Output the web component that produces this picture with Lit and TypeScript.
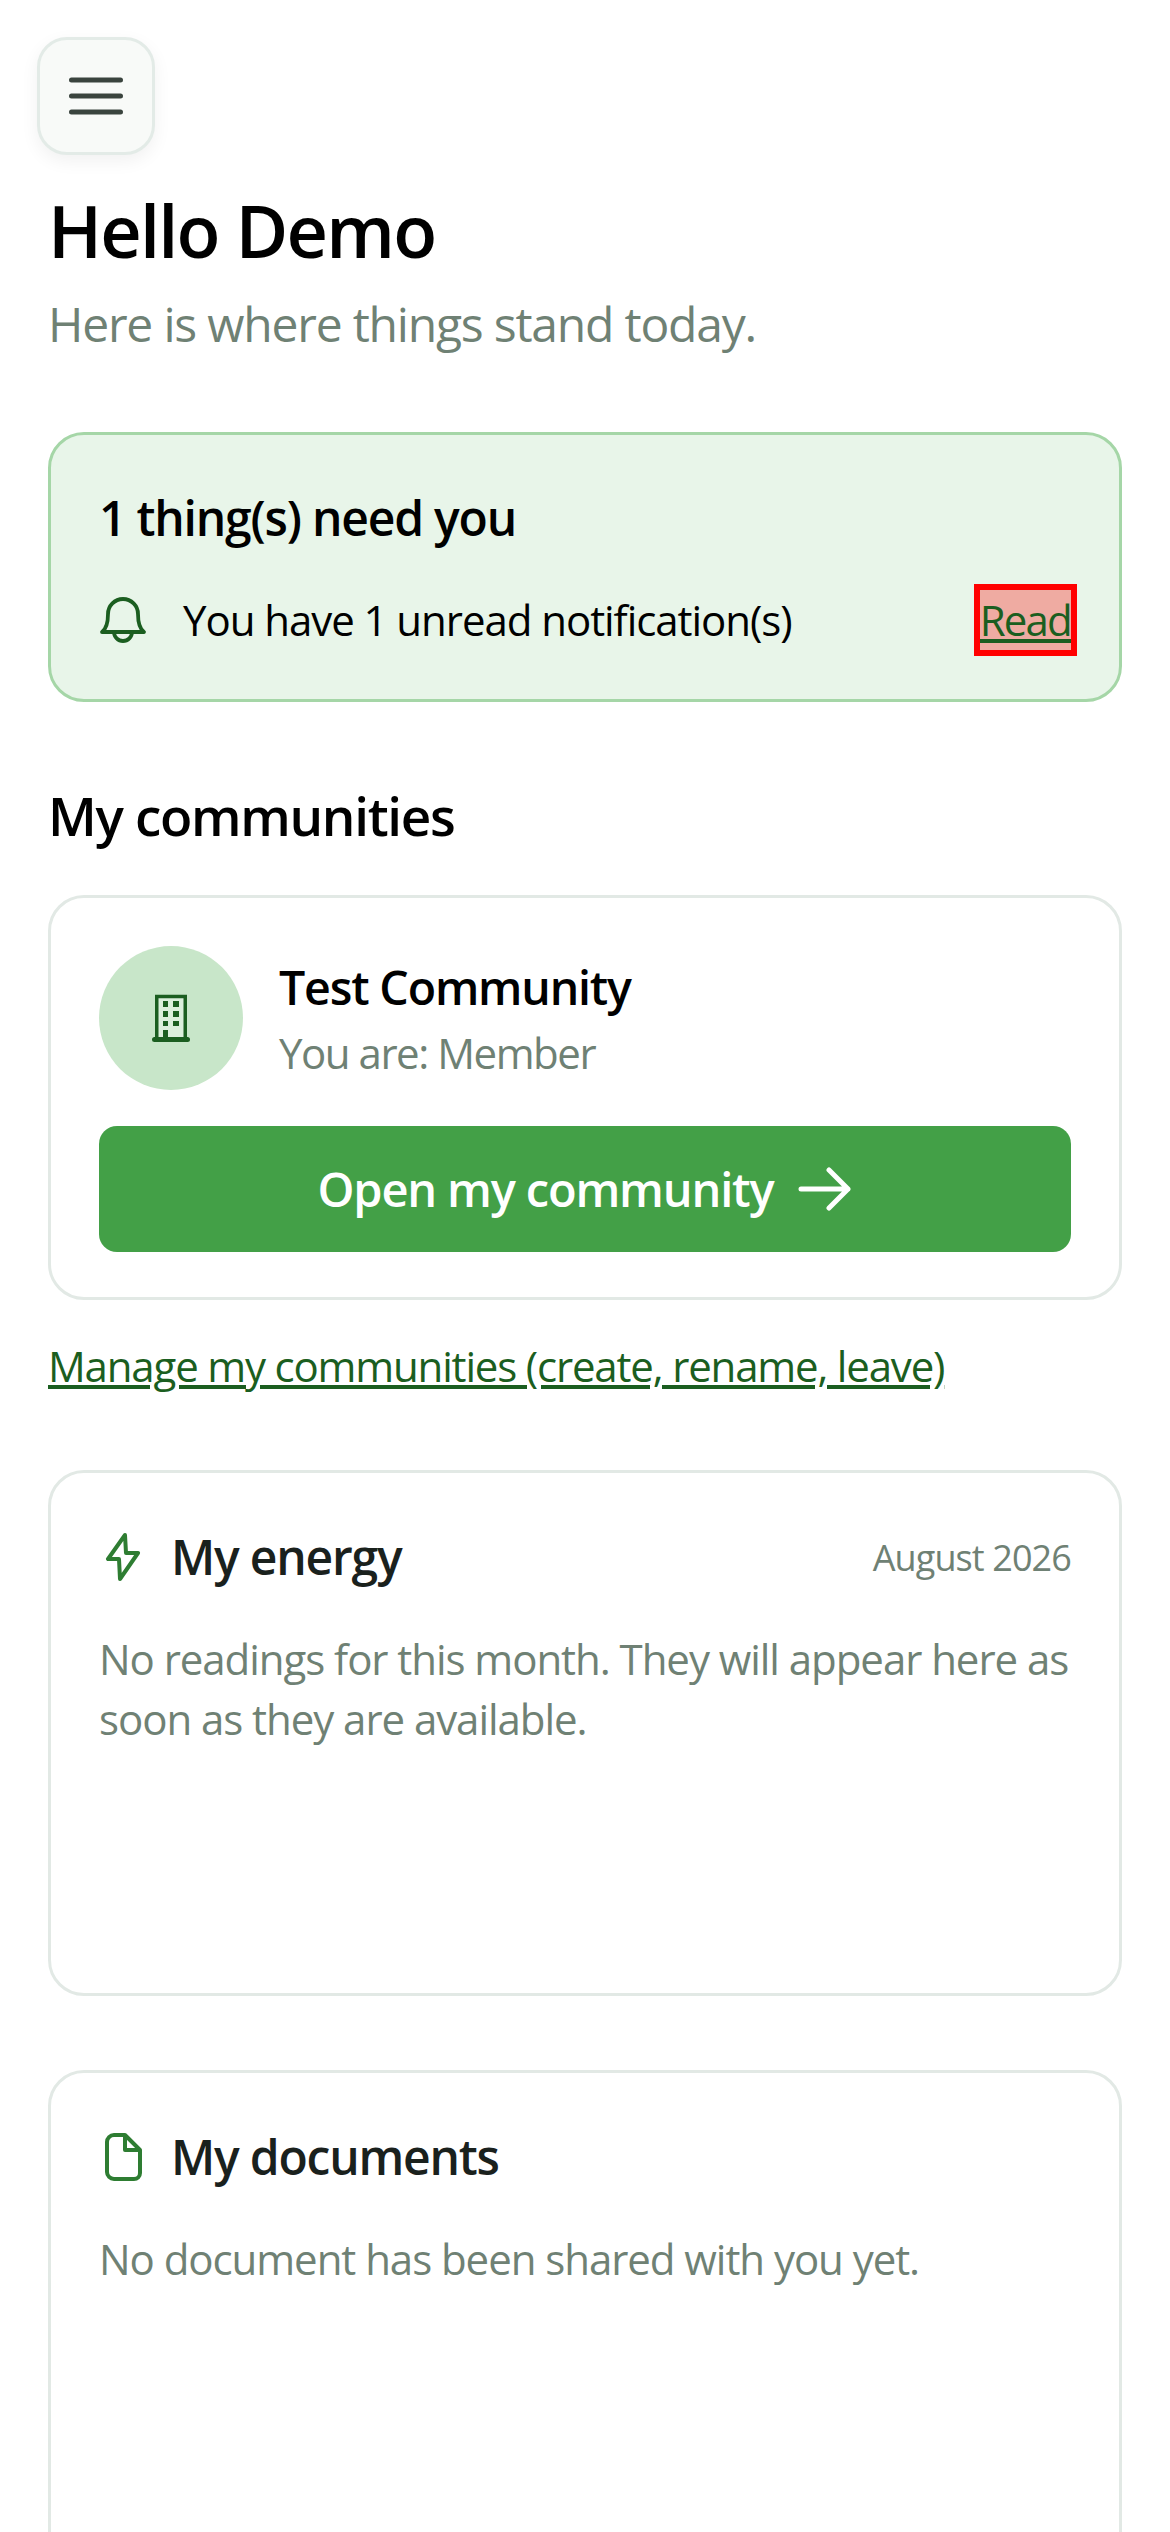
import { LitElement, html, css } from "lit";
import { customElement } from "lit/decorators.js";

@customElement("app-root")
export class AppRoot extends LitElement {
  static styles = css`
    :host { display: block; width: 1170px; height: 2532px; overflow: hidden; background: #fff; font-family: "Open Sans", "Noto Sans", sans-serif; color: #000; }
    .page { display: flex; flex-direction: column; padding: 37px 48px 0 48px; }
    .page * { letter-spacing: -0.025em; }
    .menu { box-sizing: border-box; width: 118px; height: 118px; margin-left: -11px; display: flex; align-items: center; justify-content: center; background: #f8faf8; border: 3px solid #e3ebe7; border-radius: 30px; box-shadow: 0 6px 18px rgba(0,0,0,.06); }
    .page h1 { margin: 27px 0 0; font-size: 72px; line-height: 96px; font-weight: 600; letter-spacing: -0.025em; }
    .sub { margin: 13px 0 0; font-size: 48px; line-height: 66px; color: #6f8174; }
    .card { box-sizing: border-box; border: 3px solid #e2e9e5; border-radius: 36px; padding: 48px; background: #fff; }
    .alert { margin-top: 75px; height: 270px; background: #e8f5e9; border-color: #a5d6a7; display: flex; flex-direction: column; }
    .alert h2 { margin: 2px 0 0; font-size: 48px; line-height: 66px; font-weight: 600; }
    .note { margin-top: 39px; display: flex; align-items: center; gap: 36px; font-size: 42px; line-height: 60px; }
    .note span { flex: 1; }
    .page .read { color: #1b5e20; text-decoration: underline; outline: 6px solid #f00; background: rgba(255,0,0,.3); letter-spacing: -0.043em; }
    h3 { margin: 78px 0 0; font-size: 53px; line-height: 72px; font-weight: 600; }
    .comm { margin-top: 43px; height: 405px; }
    .who { display: flex; align-items: center; gap: 36px; }
    .circle { width: 144px; height: 144px; border-radius: 50%; background: #c8e6c9; display: flex; align-items: center; justify-content: center; flex: none; }
    .name { font-size: 46.500px; line-height: 66px; font-weight: 600; }
    .page .role { margin-top: 3px; font-size: 42px; line-height: 60px; color: #6f8174; letter-spacing: -0.035em; }
    .open { margin-top: 36px; height: 126px; border-radius: 18px; background: #43a047; color: #fff; display: flex; align-items: center; justify-content: center; gap: 25px; font-size: 47px; font-weight: 600; }
    .page .manage { margin-top: 36px; font-size: 42px; line-height: 60px; color: #1b5e20; text-decoration: underline; letter-spacing: -0.028em; }
    .panel { height: 526px; }
    .energy { margin-top: 74px; }
    .docs { margin-top: 74px; }
    .head { display: flex; align-items: center; gap: 24px; padding-top: 3px; }
    .head b { flex: 1; font-size: 48px; line-height: 66px; font-weight: 600; color: #1a211d; }
    .head small { font-size: 36px; color: #6f8174; }
    .panel p { margin: 39px 0 0; font-size: 42px; line-height: 60px; color: #6f8174; }
    svg { display: block; flex: none; }
  `;
  render() {
    return html`<div class="page">
      <div class="menu">
        <svg width="56" height="40" viewBox="0 0 56 40" fill="none" stroke="#3a443e" stroke-width="5" stroke-linecap="round"><path d="M3.500 4h49M3.500 20h49M3.500 36h49"/></svg>
      </div>
      <h1>Hello Demo</h1>
      <p class="sub">Here is where things stand today.</p>
      <div class="card alert">
        <h2>1 thing(s) need you</h2>
        <div class="note">
          <svg width="48" height="48" viewBox="0 0 48 48" fill="none" stroke="#1b5e20" stroke-width="3.800" stroke-linecap="round" stroke-linejoin="round"><path d="M3 36c4-3 6-8 6-18a15 15 0 0 1 30 0c0 10 2 15 6 18z"/><path d="M15 36a9 9 0 0 0 18 0"/></svg>
          <span>You have 1 unread notification(s)</span>
          <a class="read">Read</a>
        </div>
      </div>
      <h3>My communities</h3>
      <div class="card comm">
        <div class="who">
          <div class="circle">
            <svg width="38" height="48" viewBox="0 0 38 48" fill="none" stroke="#1b5e20">
              <path d="M4.750 45V2.500h28.500V45" stroke-width="3.500" fill="#dcefdc"/>
              <path d="M2.500 45.500h33" stroke-width="5" stroke-linecap="round"/>
              <path d="M11 7h5v6h-5zM21 7h6v6h-6zM11 17h5v6h-5zM21 17h6v6h-6zM11 27h5v5h-5zM21 27h6v5h-6zM11 36h5v9h-5z" fill="#1b5e20" stroke="none"/>
            </svg>
          </div>
          <div><div class="name">Test Community</div><div class="role">You are: Member</div></div>
        </div>
        <div class="open">Open my community
          <svg width="54" height="44" viewBox="0 0 54 44" fill="none" stroke="#fff" stroke-width="5" stroke-linecap="round" stroke-linejoin="round"><path d="M3 22h47M31 3l19 19-19 19"/></svg>
        </div>
      </div>
      <a class="manage">Manage my communities (create, rename, leave)</a>
      <div class="card panel energy">
        <div class="head">
          <svg width="48" height="48" viewBox="0 0 48 48" fill="none" stroke="#2e7d32" stroke-width="4" stroke-linejoin="round"><path d="M26 2 9 26h11l1 20 18-26H27z"/></svg>
          <b>My energy</b><small>August 2026</small>
        </div>
        <p>No readings for this month. They will appear here as soon as they are available.</p>
      </div>
      <div class="card panel docs">
        <div class="head">
          <svg width="48" height="48" viewBox="0 0 48 48" fill="none" stroke="#2e7d32" stroke-width="4" stroke-linejoin="round"><path d="M15 2h11l15 15v23a6 6 0 0 1-6 6H15a7 7 0 0 1-7-7V9a7 7 0 0 1 7-7z"/><path d="M26 2v15h15"/></svg>
          <b>My documents</b>
        </div>
        <p>No document has been shared with you yet.</p>
      </div>
    </div>`;
  }
}
